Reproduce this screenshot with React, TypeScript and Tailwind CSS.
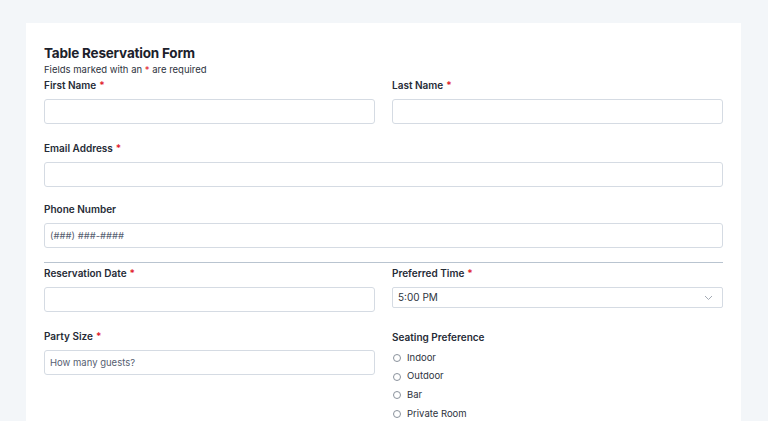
import React from 'react';

const Req = () => <span className="text-[#e11d2e] ml-[3px]">*</span>;

const Label = ({ text, required }: { text: string; required?: boolean }) => (
  <label className="block text-[10px] leading-[14px] font-semibold text-[#262b36]">
    {text}
    {required && <Req />}
  </label>
);

const TextInput = ({ placeholder }: { placeholder?: string }) => (
  <input
    type="text"
    placeholder={placeholder}
    className="mt-[7px] block w-full h-[25px] rounded-[3px] border border-[#d5dbe3] bg-white px-[5px] text-[9.5px] text-[#374151] placeholder:text-[#566071] outline-none"
  />
);

const App = () => {
  const seating = ['Indoor', 'Outdoor', 'Bar', 'Private Room'];

  return (
    <div className="min-h-screen bg-[#f3f6f9] pt-[23px] px-[26px] font-['Inter',sans-serif] overflow-hidden h-[421px]">
      <div className="bg-white w-[715px] px-[18px] pt-[21px] pb-6 min-h-[420px]">
        <h1 className="text-[13.5px] leading-[18px] font-bold text-[#1c212b] tracking-[-0.2px]">
          Table Reservation Form
        </h1>
        <p className="mt-[1px] text-[9.5px] leading-[14px] text-[#2d3340]">
          Fields marked with an <span className="text-[#e11d2e]">*</span> are required
        </p>

        <div className="mt-[1px] grid grid-cols-2 gap-x-[17px]">
          <div>
            <Label text="First Name" required />
            <TextInput />
          </div>
          <div>
            <Label text="Last Name" required />
            <TextInput />
          </div>
        </div>

        <div className="mt-[17px]">
          <Label text="Email Address" required />
          <TextInput />
        </div>

        <div className="mt-[15px]">
          <Label text="Phone Number" />
          <TextInput placeholder="(###) ###-####" />
        </div>

        <div className="mt-[14px] border-t border-[#b9c4d0]" />

        <div className="mt-[3px] grid grid-cols-2 gap-x-[17px]">
          <div>
            <Label text="Reservation Date" required />
            <TextInput />
            <div className="mt-[17px]">
              <Label text="Party Size" required />
              <TextInput placeholder="How many guests?" />
            </div>
          </div>
          <div>
            <Label text="Preferred Time" required />
            <div className="mt-[7px] relative h-[21px] w-full rounded-[2px] border border-[#d5dbe3] bg-white flex items-center px-[5px] text-[10px] text-[#2d3340]">
              5:00 PM
              <svg
                className="absolute right-[9px] top-[7px]"
                width="9"
                height="6"
                viewBox="0 0 9 6"
                fill="none"
              >
                <path d="M1 1l3.5 3.5L8 1" stroke="#a3aab4" strokeWidth="1" />
              </svg>
            </div>
            <div className="mt-[22px]">
              <Label text="Seating Preference" />
              <div className="mt-[7px] flex flex-col gap-[4.6px]">
                {seating.map((opt) => (
                  <label key={opt} className="flex items-center h-[14px] text-[9.5px] text-[#2d3340]">
                    <span className="ml-[1px] w-[8px] h-[8px] rounded-full border border-[#8a929c] bg-white" />
                    <span className="ml-[6px]">{opt}</span>
                  </label>
                ))}
              </div>
            </div>
          </div>
        </div>
      </div>
    </div>
  );
};

export default App;
